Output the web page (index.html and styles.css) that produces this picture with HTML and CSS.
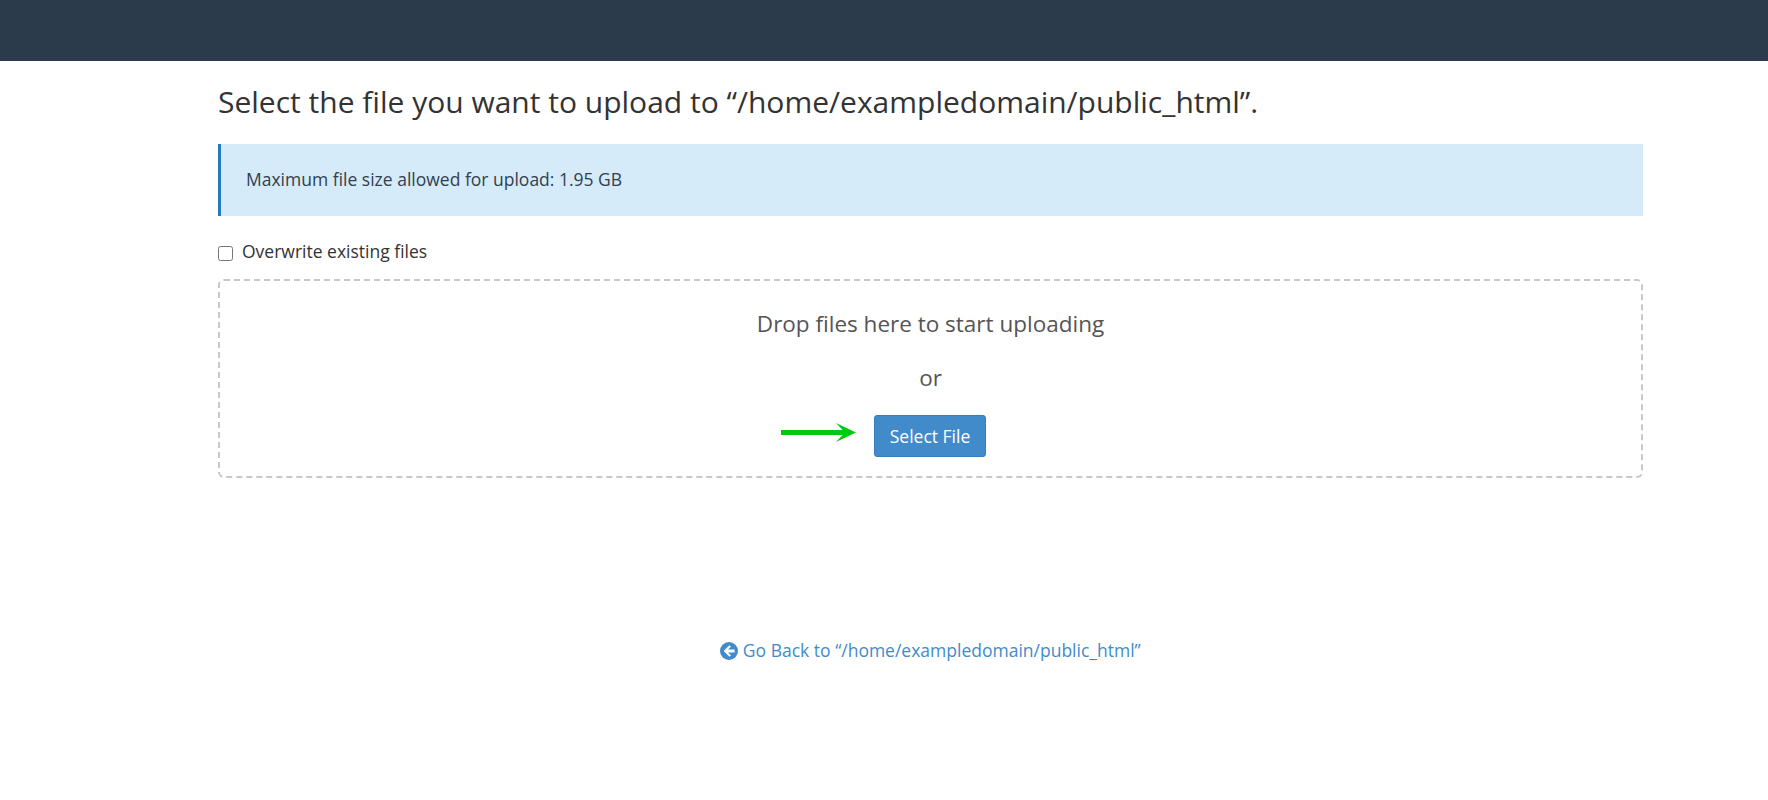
FILE: index.html
```html
<!DOCTYPE html>
<html lang="en">
<head>
  <meta charset="UTF-8">
  <title>File Upload</title>
  <link rel="stylesheet" href="styles.css">
</head>
<body>
  <div class="topbar"></div>
  <div class="container">
    <h1 class="title">Select the file you want to upload to “/home/exampledomain/public_html”.</h1>

    <div class="notice">Maximum file size allowed for upload: 1.95 GB</div>

    <label class="overwrite">
      <input type="checkbox" class="overwrite-check">
      Overwrite existing files
    </label>

    <div class="dropzone">
      <div class="drop-text">Drop files here to start uploading</div>
      <div class="drop-or">or</div>
      <div class="btn-wrap">
        <svg class="arrow" width="75" height="20" viewBox="0 0 75 20">
          <path d="M0 7H65V12H0Z" fill="#00c814"/>
          <path d="M55 0L75 9.5L55 19L64 9.5Z" fill="#00c814"/>
        </svg>
        <button type="button" class="btn-select">Select File</button>
      </div>
    </div>

    <div class="back">
      <a href="#">
        <svg class="back-icon" width="18" height="18" viewBox="0 0 18 18">
          <circle cx="9" cy="9" r="9" fill="#428bca"/>
          <path d="M9.4 3.2L3.6 9L9.4 14.8L11 13.2L8 10.4H14.6V7.6H8L11 4.8Z" fill="#fff"/>
        </svg>
        Go Back to “/home/exampledomain/public_html”
      </a>
    </div>
  </div>
</body>
</html>
```

FILE: styles.css
```css
body {
  margin: 0;
  font-family: "Open Sans", sans-serif;
  font-size: 17.5px;
  color: #333;
  background: #fff;
}
.topbar {
  height: 61px;
  background: #2b3b4c;
}
.container {
  width: 1425px;
  margin-left: 218px;
}
.title {
  margin: 0;
  padding-top: 22px;
  font-size: 30px;
  line-height: 38px;
  font-weight: 400;
}
.notice {
  margin-top: 23px;
  height: 72px;
  line-height: 70px;
  padding-left: 25px;
  border-left: 3px solid #2a7ab5;
  background: #d6ebf9;
  color: #31404f;
}
.overwrite {
  display: flex;
  align-items: center;
  gap: 9px;
  margin-top: 24px;
  height: 22px;
}
.overwrite-check {
  width: 15px;
  height: 15px;
  margin: 5px 0 0;
}
.dropzone {
  box-sizing: border-box;
  height: 199px;
  margin-top: 17px;
  padding-top: 28px;
  border: 2px dashed #c8c8c8;
  border-radius: 6px;
  text-align: center;
  color: #555;
  font-size: 22.5px;
}
.drop-text {
  line-height: 30px;
}
.drop-or {
  margin-top: 24px;
  line-height: 30px;
}
.btn-wrap {
  position: relative;
  width: 113px;
  margin: 22px auto 0;
  text-align: left;
}
.arrow {
  position: absolute;
  left: -93px;
  top: 8px;
}
.btn-select {
  box-sizing: border-box;
  width: 112px;
  height: 42px;
  border: 1px solid #357ebd;
  border-radius: 3px;
  background: #428bca;
  color: #fff;
  font-family: inherit;
  font-size: 17.5px;
  cursor: pointer;
}
.back {
  margin-top: 161px;
  text-align: center;
  line-height: 22px;
}
.back a {
  color: #428bca;
  text-decoration: none;
}
.back-icon {
  vertical-align: -3px;
}
```
